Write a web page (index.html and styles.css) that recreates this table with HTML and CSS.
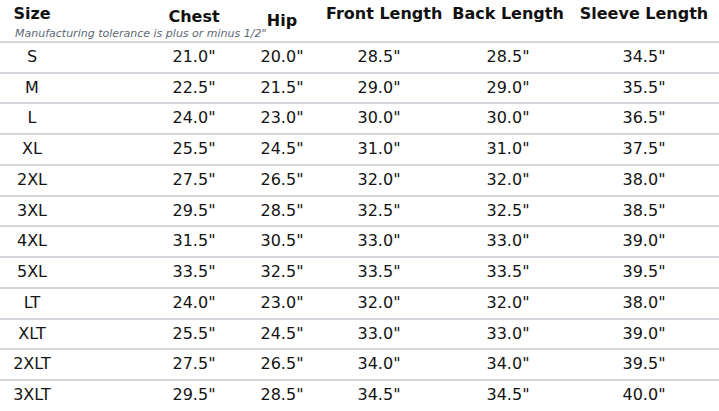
FILE: index.html
```html
<!DOCTYPE html>
<html lang="en">
<head>
<meta charset="utf-8">
<title>Size Chart</title>
<link rel="stylesheet" href="styles.css">
</head>
<body>
<table class="chart">
  <colgroup>
    <col class="c-size">
    <col class="c-chest">
    <col class="c-hip">
    <col class="c-front">
    <col class="c-back">
    <col class="c-sleeve">
  </colgroup>
  <thead>
    <tr class="head">
      <th class="h-size">Size</th>
      <th class="h-chest">Chest</th>
      <th class="h-hip">Hip</th>
      <th class="h-top">Front Length</th>
      <th class="h-top">Back Length</th>
      <th class="h-top h-last"><span class="fit">Sleeve Length</span></th>
    </tr>
    <tr class="note-row">
      <td class="note" colspan="6">Manufacturing tolerance is plus or minus 1/2"</td>
    </tr>
  </thead>
  <tbody>
    <tr><td>S</td><td class="chest">21.0"</td><td>20.0"</td><td>28.5"</td><td>28.5"</td><td class="last">34.5"</td></tr>
    <tr><td>M</td><td class="chest">22.5"</td><td>21.5"</td><td>29.0"</td><td>29.0"</td><td class="last">35.5"</td></tr>
    <tr><td>L</td><td class="chest">24.0"</td><td>23.0"</td><td>30.0"</td><td>30.0"</td><td class="last">36.5"</td></tr>
    <tr><td>XL</td><td class="chest">25.5"</td><td>24.5"</td><td>31.0"</td><td>31.0"</td><td class="last">37.5"</td></tr>
    <tr><td>2XL</td><td class="chest">27.5"</td><td>26.5"</td><td>32.0"</td><td>32.0"</td><td class="last">38.0"</td></tr>
    <tr><td>3XL</td><td class="chest">29.5"</td><td>28.5"</td><td>32.5"</td><td>32.5"</td><td class="last">38.5"</td></tr>
    <tr><td>4XL</td><td class="chest">31.5"</td><td>30.5"</td><td>33.0"</td><td>33.0"</td><td class="last">39.0"</td></tr>
    <tr><td>5XL</td><td class="chest">33.5"</td><td>32.5"</td><td>33.5"</td><td>33.5"</td><td class="last">39.5"</td></tr>
    <tr><td>LT</td><td class="chest">24.0"</td><td>23.0"</td><td>32.0"</td><td>32.0"</td><td class="last">38.0"</td></tr>
    <tr><td>XLT</td><td class="chest">25.5"</td><td>24.5"</td><td>33.0"</td><td>33.0"</td><td class="last">39.0"</td></tr>
    <tr><td>2XLT</td><td class="chest">27.5"</td><td>26.5"</td><td>34.0"</td><td>34.0"</td><td class="last">39.5"</td></tr>
    <tr><td>3XLT</td><td class="chest">29.5"</td><td>28.5"</td><td>34.5"</td><td>34.5"</td><td class="last">40.0"</td></tr>
  </tbody>
</table>
</body>
</html>
```

FILE: styles.css
```css
html, body {
  margin: 0;
  padding: 0;
  background: #ffffff;
}

body {
  font-family: "DejaVu Sans", Verdana, sans-serif;
  color: #141414;
  overflow: hidden;
}

.chart {
  width: 719px;
  table-layout: fixed;
  border-collapse: separate;
  border-spacing: 0;
}

.c-size { width: 64px; }
.c-chest { width: 174px; }
.c-hip { width: 88px; }
.c-front { width: 106px; }
.c-back { width: 152px; }
.c-sleeve { width: 135px; }

.chart th,
.chart td {
  padding: 0;
  text-align: center;
  white-space: nowrap;
}

.chart .head th {
  height: 27px;
  box-sizing: border-box;
  vertical-align: top;
  font-weight: bold;
  font-size: 16px;
  line-height: 12px;
  color: #111;
}

.chart .head .h-size { padding-top: 7.5px; }
.chart .head .h-chest { padding-top: 11px; padding-left: 86px; }
.chart .head .h-hip { padding-top: 15px; }
.chart .head .h-top { padding-top: 7.5px; }
.chart .head .h-last { padding-right: 15px; }

.fit {
  display: inline-block;
  margin: 0 -10px;
}

.chart .note-row .note {
  text-align: left;
  padding-left: 15px;
  height: 14px;
  vertical-align: top;
  font-size: 11px;
  font-style: italic;
  line-height: 14px;
  color: #5d6873;
}

.chart tbody td {
  border-top: 2px solid #d3d6da;
  font-size: 16px;
  line-height: 28.73px;
  vertical-align: middle;
}

.chart tbody .chest { padding-left: 86px; }
.chart tbody .last { padding-right: 15px; }
```
